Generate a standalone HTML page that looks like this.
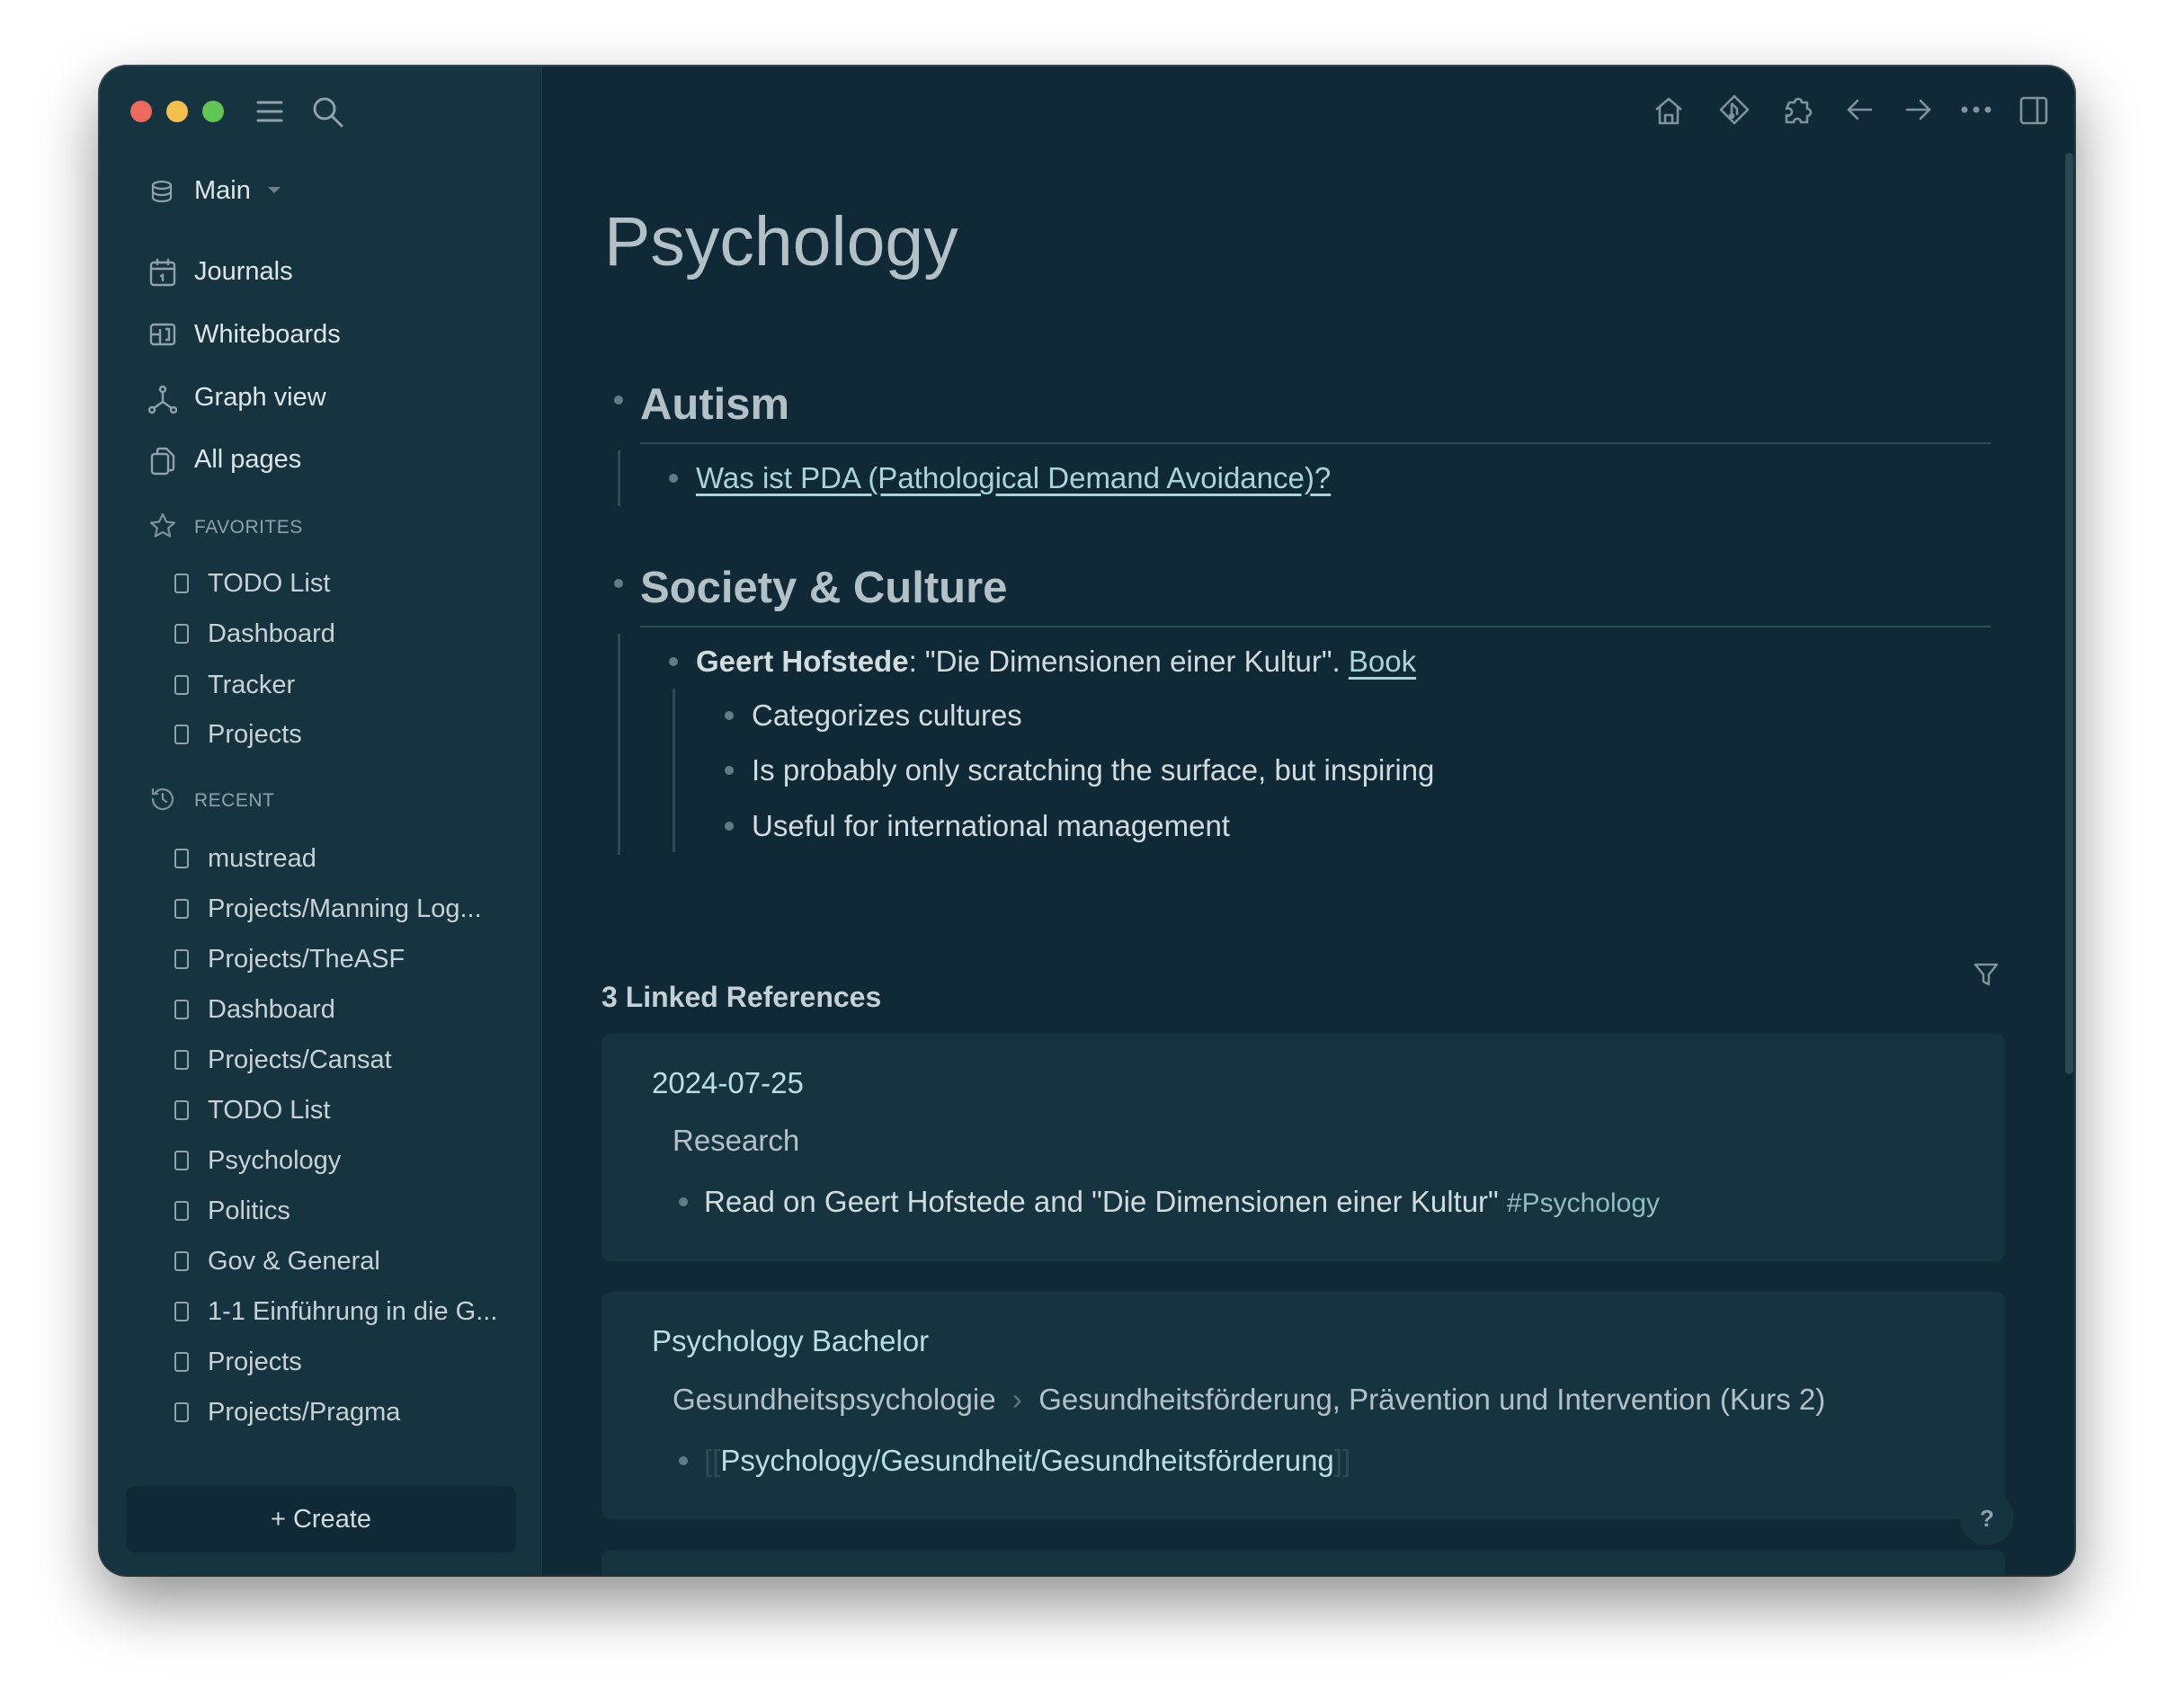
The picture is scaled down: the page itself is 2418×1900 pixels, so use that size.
<!DOCTYPE html>
<html><head><meta charset="utf-8"><style>
*{margin:0;padding:0;box-sizing:border-box}
body{width:2418px;height:1900px;background:#fff;font-family:"Liberation Sans",sans-serif;position:relative;overflow:hidden}
.win{position:absolute;left:111px;top:74px;width:2196px;height:1678px;border-radius:30px;background:#0f2a36;overflow:hidden;box-shadow:0 30px 70px rgba(0,0,0,.45),0 0 0 2px #3a4a52}
.side{position:absolute;left:0;top:0;width:492px;height:100%;background:#163340;border-right:1px solid #1d3d4a}
.a{position:absolute;white-space:nowrap}
.s{color:#dfe6e9;font-size:29px;line-height:34px}
.f{color:#c8d2d6;font-size:29px;line-height:34px}
.h{color:#8fa2ab;font-size:21px;line-height:24px;letter-spacing:.5px}
.t{color:#d2dbde}
.dot{position:absolute;width:10px;height:10px;border-radius:50%;background:#5f7d89}
.ln{position:absolute;background:#2a4b59}
.card{position:absolute;left:558px;width:1561px;background:#163440;border-radius:10px}
.c{font-size:33px;line-height:38px}
svg{position:absolute}
</style></head><body>
<div class="win">
 <div class="side">
  <div style="position:absolute;left:34px;top:38px;width:24px;height:24px;border-radius:50%;background:#ec6a5e"></div>
  <div style="position:absolute;left:74px;top:38px;width:24px;height:24px;border-radius:50%;background:#f4bf4f"></div>
  <div style="position:absolute;left:114px;top:38px;width:24px;height:24px;border-radius:50%;background:#61c554"></div>
  <svg style="left:173px;top:35px" width="32" height="30" viewBox="0 0 32 30" fill="none" stroke="#8fa2ab" stroke-width="3" stroke-linecap="round"><path d="M3 5H29M3 15H29M3 25H29"/></svg>
  <svg style="left:235px;top:32px" width="38" height="38" viewBox="0 0 38 38" fill="none" stroke="#8fa2ab" stroke-width="3" stroke-linecap="round"><circle cx="15" cy="15" r="11"/><path d="M23 23L34 34"/></svg>
  <svg style="left:56px;top:126px" width="26" height="26" viewBox="0 0 26 26" fill="none" stroke="#8fa2ab" stroke-width="2.2"><ellipse cx="13" cy="6" rx="10" ry="4"/><path d="M3 6V20c0 2.2 4.5 4 10 4s10-1.8 10-4V6M3 13c0 2.2 4.5 4 10 4s10-1.8 10-4"/></svg>
  <div class="a s" style="left:105px;top:121px">Main</div>
  <svg style="left:186px;top:133px" width="16" height="10" viewBox="0 0 16 10"><path d="M1 1H15L8 8Z" fill="#6f8089"/></svg>
  <svg style="left:55px;top:213px" width="30" height="32" viewBox="0 0 30 32" fill="none" stroke="#8fa2ab" stroke-width="2.4" stroke-linecap="round"><rect x="2" y="5" width="26" height="25" rx="3"/><path d="M2 12H28M9 2V7M21 2V7M13 20l2-1v6"/></svg>
  <div class="a s" style="left:105px;top:211px">Journals</div>
  <svg style="left:55px;top:285px" width="30" height="26" viewBox="0 0 30 26" fill="none" stroke="#8fa2ab" stroke-width="2.4"><rect x="2" y="2" width="26" height="22" rx="3"/><path d="M2 13H12V7M12 13V24M18 7H22V19H18"/></svg>
  <div class="a s" style="left:105px;top:281px">Whiteboards</div>
  <svg style="left:54px;top:355px" width="32" height="32" viewBox="0 0 32 32" fill="none" stroke="#8fa2ab" stroke-width="2.4"><circle cx="16" cy="4" r="3"/><circle cx="4" cy="27" r="3"/><circle cx="28" cy="27" r="3"/><path d="M16 7V18L6 25M16 18L26 25"/></svg>
  <div class="a s" style="left:105px;top:351px">Graph view</div>
  <svg style="left:56px;top:423px" width="28" height="32" viewBox="0 0 28 32" fill="none" stroke="#8fa2ab" stroke-width="2.4"><path d="M8 8V4a2 2 0 012-2h8l8 8v14a2 2 0 01-2 2h-4"/><rect x="2" y="8" width="18" height="22" rx="3"/></svg>
  <div class="a s" style="left:105px;top:420px">All pages</div>
  <svg style="left:55px;top:496px" width="30" height="30" viewBox="0 0 30 30" fill="none" stroke="#7f929b" stroke-width="2.2" stroke-linejoin="round"><path d="M15 2l4 8.5 9 1-6.8 6 2 9L15 22l-8.2 4.5 2-9L2 11.5l9-1z"/></svg>
  <div class="a h" style="left:105px;top:501px">FAVORITES</div>
  <svg style="left:55px;top:800px" width="30" height="30" viewBox="0 0 30 30" fill="none" stroke="#7f929b" stroke-width="2.2" stroke-linecap="round"><path d="M4 15a11 11 0 1 0 3-7.5M4 4v5h5M15 9v6l4 3"/></svg>
  <div class="a h" style="left:105px;top:805px">RECENT</div>
  <div style="position:absolute;left:29px;top:1579px;width:434px;height:74px;border-radius:10px;background:#0f2a36;color:#d2dbde;font-size:29px;line-height:74px;text-align:center">+ Create</div>
 </div>
 <svg style="left:1727px;top:32px" width="36" height="36" viewBox="0 0 36 36" fill="none" stroke="#7f939c" stroke-width="2.6" stroke-linejoin="round"><path d="M4 16L18 4l14 12M8 13v18h20V13M14 31v-9h8v9"/></svg>
 <svg style="left:1800px;top:30px" width="36" height="36" viewBox="0 0 36 36" fill="none" stroke="#7f939c" stroke-width="2.6" stroke-linejoin="round"><path d="M18 3L33 18 18 33 3 18z"/><path d="M15 11v14M15 11l6 6v7"/><circle cx="15" cy="25" r="2" fill="#7f939c"/></svg>
 <svg style="left:1871px;top:30px" width="36" height="36" viewBox="0 0 36 36" fill="none" stroke="#7f939c" stroke-width="2.6" stroke-linejoin="round"><path d="M8 10h6a4 4 0 118 0h6v7a4 4 0 110 8v7h-7a4 4 0 10-8 0H5v-8a4 4 0 100-7z"/></svg>
 <svg style="left:1942px;top:34px" width="32" height="28" viewBox="0 0 32 28" fill="none" stroke="#7f939c" stroke-width="2.6" stroke-linecap="round"><path d="M28 14H4M13 4L3 14l10 10"/></svg>
 <svg style="left:2006px;top:34px" width="32" height="28" viewBox="0 0 32 28" fill="none" stroke="#7f939c" stroke-width="2.6" stroke-linecap="round"><path d="M4 14H28M19 4l10 10-10 10"/></svg>
 <svg style="left:2070px;top:43px" width="34" height="10" viewBox="0 0 34 10" fill="#7f939c"><circle cx="4" cy="5" r="3.5"/><circle cx="17" cy="5" r="3.5"/><circle cx="30" cy="5" r="3.5"/></svg>
 <svg style="left:2135px;top:33px" width="32" height="32" viewBox="0 0 32 32" fill="none" stroke="#7f939c" stroke-width="2.6"><rect x="2" y="2" width="28" height="28" rx="3"/><path d="M20 2V30"/></svg>
 <div style="position:absolute;left:2186px;top:96px;width:9px;height:1025px;border-radius:5px;background:#2b4754"></div>

 <div class="a" style="left:561px;top:150px;font-size:77px;line-height:90px;color:#b3c0c5">Psychology</div>
 <div class="dot" style="left:572px;top:366px"></div>
 <div class="a" style="left:601px;top:346px;font-size:49px;line-height:60px;font-weight:bold;color:#b3c0c5">Autism</div>
 <div class="ln" style="left:601px;top:418px;width:1502px;height:2px"></div>
 <div class="ln" style="left:576px;top:427px;width:3px;height:62px"></div>
 <div class="dot" style="left:633px;top:453px"></div>
 <div class="a c" style="left:663px;top:439px;color:#a9d5d9;text-decoration:underline;text-underline-offset:6px">Was ist PDA (Pathological Demand Avoidance)?</div>
 <div class="dot" style="left:572px;top:570px"></div>
 <div class="a" style="left:601px;top:550px;font-size:49px;line-height:60px;font-weight:bold;color:#b3c0c5">Society &amp; Culture</div>
 <div class="ln" style="left:601px;top:622px;width:1502px;height:2px"></div>
 <div class="ln" style="left:576px;top:631px;width:3px;height:246px"></div>
 <div class="ln" style="left:637px;top:692px;width:3px;height:182px"></div>
 <div class="dot" style="left:633px;top:657px"></div>
 <div class="a t c" style="left:663px;top:643px"><b>Geert Hofstede</b>: "Die Dimensionen einer Kultur". <span style="color:#a9d5d9;text-decoration:underline;text-underline-offset:6px">Book</span></div>
 <div class="dot" style="left:695px;top:717px"></div>
 <div class="a t c" style="left:725px;top:703px">Categorizes cultures</div>
 <div class="dot" style="left:695px;top:778px"></div>
 <div class="a t c" style="left:725px;top:764px">Is probably only scratching the surface, but inspiring</div>
 <div class="dot" style="left:695px;top:840px"></div>
 <div class="a t c" style="left:725px;top:826px">Useful for international management</div>

 <svg style="left:2084px;top:996px" width="28" height="28" viewBox="0 0 28 28" fill="none" stroke="#7f939c" stroke-width="2.4" stroke-linejoin="round"><path d="M2 3H26L17 14V25L11 22V14Z"/></svg>
 <div class="a" style="left:558px;top:1016px;font-size:32px;line-height:38px;color:#c5d0d4;font-weight:bold">3 Linked References</div>

 <div class="card" style="top:1076px;height:253px">
  <div class="a c" style="left:56px;top:36px;color:#b8dfe2">2024-07-25</div>
  <div class="a c" style="left:79px;top:100px;color:#b3c0c5">Research</div>
  <div class="dot" style="left:86px;top:182px"></div>
  <div class="a t c" style="left:114px;top:168px">Read on Geert Hofstede and "Die Dimensionen einer Kultur" <span style="color:#8fbcc2;font-size:30px">#Psychology</span></div>
 </div>
 <div class="card" style="top:1363px;height:253px">
  <div class="a c" style="left:56px;top:36px;color:#b8dfe2">Psychology Bachelor</div>
  <div class="a c" style="left:79px;top:101px;color:#b3c0c5">Gesundheitspsychologie <span style="color:#5f7680">&nbsp;›&nbsp;</span> Gesundheitsförderung, Prävention und Intervention (Kurs 2)</div>
  <div class="dot" style="left:86px;top:183px"></div>
  <div class="a c" style="left:114px;top:169px;color:#b8dfe2"><span style="color:#2d4a56">[[</span>Psychology/Gesundheit/Gesundheitsförderung<span style="color:#2d4a56">]]</span></div>
 </div>
 <div class="card" style="top:1650px;height:100px"></div>
 <div style="position:absolute;left:2069px;top:1585px;width:60px;height:60px;border-radius:50%;background:#163440;color:#8fa2ab;font-size:26px;font-weight:bold;line-height:60px;text-align:center">?</div>
</div>
<style>.pi{position:absolute;width:16px;height:22px;border:2.4px solid #8fa2ab;border-radius:3px}</style>
<div style="position:absolute;left:111px;top:74px">
 <div class="pi" style="left:83px;top:564px"></div><div class="a f" style="left:120px;top:558px">TODO List</div>
 <div class="pi" style="left:83px;top:620px"></div><div class="a f" style="left:120px;top:614px">Dashboard</div>
 <div class="pi" style="left:83px;top:677px"></div><div class="a f" style="left:120px;top:671px">Tracker</div>
 <div class="pi" style="left:83px;top:732px"></div><div class="a f" style="left:120px;top:726px">Projects</div>
 <div class="pi" style="left:83px;top:870px"></div><div class="a f" style="left:120px;top:864px">mustread</div>
 <div class="pi" style="left:83px;top:926px"></div><div class="a f" style="left:120px;top:920px">Projects/Manning Log...</div>
 <div class="pi" style="left:83px;top:982px"></div><div class="a f" style="left:120px;top:976px">Projects/TheASF</div>
 <div class="pi" style="left:83px;top:1038px"></div><div class="a f" style="left:120px;top:1032px">Dashboard</div>
 <div class="pi" style="left:83px;top:1094px"></div><div class="a f" style="left:120px;top:1088px">Projects/Cansat</div>
 <div class="pi" style="left:83px;top:1150px"></div><div class="a f" style="left:120px;top:1144px">TODO List</div>
 <div class="pi" style="left:83px;top:1206px"></div><div class="a f" style="left:120px;top:1200px">Psychology</div>
 <div class="pi" style="left:83px;top:1262px"></div><div class="a f" style="left:120px;top:1256px">Politics</div>
 <div class="pi" style="left:83px;top:1318px"></div><div class="a f" style="left:120px;top:1312px">Gov &amp; General</div>
 <div class="pi" style="left:83px;top:1374px"></div><div class="a f" style="left:120px;top:1368px">1-1 Einführung in die G...</div>
 <div class="pi" style="left:83px;top:1430px"></div><div class="a f" style="left:120px;top:1424px">Projects</div>
 <div class="pi" style="left:83px;top:1486px"></div><div class="a f" style="left:120px;top:1480px">Projects/Pragma</div>
</div>
</body></html>
